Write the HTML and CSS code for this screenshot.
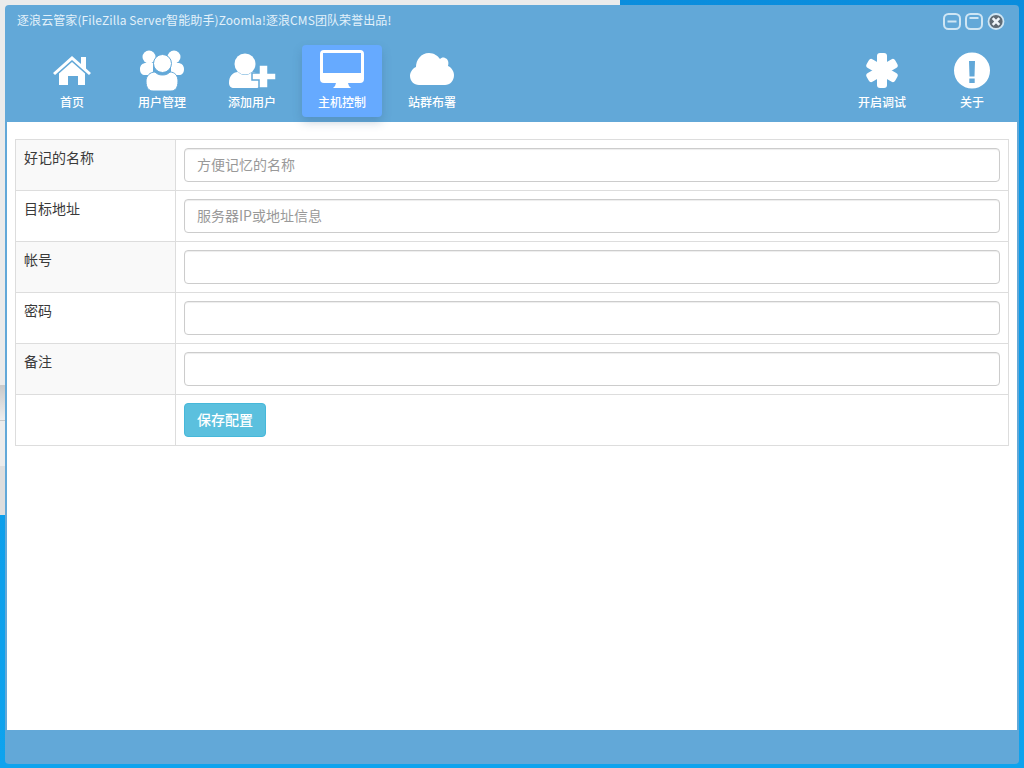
FILE: index.html
```html
<!DOCTYPE html>
<html lang="zh-CN">
<head>
    <meta charset="UTF-8">
    <title>逐浪云管家</title>
    <link rel="stylesheet" href="styles.css">
</head>
<body>

<!-- Windows behind the app -->
<div class="behind">
    <div class="behind-band"></div>
    <div class="behind-row"></div>
    <div class="behind-low"></div>
</div>

<div class="window">
    <!-- Title bar -->
    <div class="titlebar">
        <span class="title">逐浪云管家(FileZilla Server智能助手)Zoomla!逐浪CMS团队荣誉出品!</span>
        <div class="controls">
            <svg width="18" height="17" viewBox="0 0 18 17"><rect x="1" y="1" width="16" height="15" rx="4.500" fill="none" stroke="#cfe6f4" stroke-width="2"/><rect x="4.500" y="7.500" width="9" height="2" fill="#cfe6f4"/></svg>
            <svg width="18" height="17" viewBox="0 0 18 17"><rect x="1" y="1" width="16" height="15" rx="4.500" fill="none" stroke="#cfe6f4" stroke-width="2"/><rect x="4.500" y="4" width="9" height="2" fill="#cfe6f4"/></svg>
            <svg width="18" height="17" viewBox="0 0 18 17"><circle cx="9" cy="8.500" r="7.500" fill="#5f6b75" stroke="#cfe6f4" stroke-width="1.800"/><path d="M5.700 5.200l6.600 6.600M12.300 5.200l-6.600 6.600" stroke="#eef5fa" stroke-width="2.600"/></svg>
        </div>
    </div>

    <!-- Main navigation -->
    <div class="nav">
        <div class="nav-group">
            <a class="nav-item">
                <svg class="nav-icon" width="44" height="42" viewBox="0 0 44 42"><path d="M22 7l9 8V8h5v11.500l5 4.500-2 2-17-15L5 26l-2-2z" fill="#fff"/><path d="M22 13l13 11.500V36h-7v-9H18v9H9V24.500z" fill="#fff"/></svg>
                <span>首页</span>
            </a>
            <a class="nav-item">
                <svg class="nav-icon" width="44" height="42" viewBox="0 0 44 42">
                    <circle cx="9" cy="8" r="6.500" fill="#fff"/><circle cx="34" cy="8" r="6.500" fill="#fff"/>
                    <path d="M0 20c0-4 3-6 6-6h7v12H5c-3 0-5-2-5-6zM44 20c0-4-3-6-6-6h-7v12h8c3 0 5-2 5-6z" fill="#fff"/>
                    <circle cx="22.500" cy="14.500" r="9" fill="#fff" stroke="#62a8d8" stroke-width="1"/>
                    <path d="M6 32c0-5 4-9 9-9 2 2 4 3 7.500 3s5.500-1 7.500-3c5 0 8 4 8 9 0 7-3 10-7 10H13c-4 0-7-3-7-10z" fill="#fff" stroke="#62a8d8" stroke-width="1"/>
                </svg>
                <span>用户管理</span>
            </a>
            <a class="nav-item">
                <svg class="nav-icon" width="48" height="42" viewBox="0 0 48 42">
                    <circle cx="17" cy="15" r="10.500" fill="#fff"/>
                    <path d="M1 34c0-7 4-11 9-11 2 2 4 3 7 3s5-1 7-3c5 0 9 3 9 11 0 3-2 5-5 5H6c-3 0-5-2-5-5z" fill="#fff"/>
                    <path d="M31 16h9v8h8v7h-8v8h-9v-8h-7v-7h7z" fill="#fff" stroke="#62a8d8" stroke-width="1.500"/>
                </svg>
                <span>添加用户</span>
            </a>
            <a class="nav-item active">
                <svg class="nav-icon" width="44" height="42" viewBox="0 0 44 42"><path d="M4 1h36a4 4 0 0 1 4 4v25a4 4 0 0 1-4 4H4a4 4 0 0 1-4-4V5a4 4 0 0 1 4-4zM3 4v20h38V4z" fill="#fff" fill-rule="evenodd"/><path d="M16 34h12l1 3 2 2H13l2-2z" fill="#fff"/></svg>
                <span>主机控制</span>
            </a>
            <a class="nav-item">
                <svg class="nav-icon" width="44" height="42" viewBox="0 0 44 42"><path d="M9 36C4 36 0 32 0 27c0-4 3-8 6-9 0-7 5-14 13-14 5 0 9 3 11 6 1-1 3-2 5-1 3 1 4 4 3 8 3 1 6 5 6 9 0 6-4 10-9 10z" fill="#fff"/></svg>
                <span>站群布署</span>
            </a>
        </div>
        <div class="nav-group">
            <a class="nav-item">
                <svg class="nav-icon" width="36" height="42" viewBox="0 0 36 42" fill="#fff">
                    <rect x="13" y="4" width="10" height="35" rx="3"/>
                    <rect x="13" y="5" width="10" height="33" rx="3" transform="rotate(60 18 21.500)"/>
                    <rect x="13" y="5" width="10" height="33" rx="3" transform="rotate(-60 18 21.500)"/>
                </svg>
                <span>开启调试</span>
            </a>
            <a class="nav-item">
                <svg class="nav-icon" width="36" height="42" viewBox="0 0 36 42"><path d="M18 3.500a18 18 0 1 0 0 36 18 18 0 0 0 0-36zM15 12h6l-.5 15.500h-5zM15.300 29.500h5.400v4.500h-5.400z" fill="#fff" fill-rule="evenodd"/></svg>
                <span>关于</span>
            </a>
        </div>
    </div>

    <!-- Host form -->
    <div class="content">
        <table class="form-table">
            <tr class="odd">
                <td class="label-cell">好记的名称</td>
                <td><input type="text" class="text-input" placeholder="方便记忆的名称"></td>
            </tr>
            <tr>
                <td class="label-cell">目标地址</td>
                <td><input type="text" class="text-input" placeholder="服务器IP或地址信息"></td>
            </tr>
            <tr class="odd">
                <td class="label-cell">帐号</td>
                <td><input type="text" class="text-input"></td>
            </tr>
            <tr>
                <td class="label-cell">密码</td>
                <td><input type="text" class="text-input"></td>
            </tr>
            <tr class="odd">
                <td class="label-cell">备注</td>
                <td><input type="text" class="text-input"></td>
            </tr>
            <tr>
                <td class="label-cell"></td>
                <td><button class="save-btn">保存配置</button></td>
            </tr>
        </table>
    </div>

    <div class="footer"></div>
</div>

</body>
</html>
```

FILE: styles.css
```css
/* Desktop behind the app window */
html, body {
    margin: 0;
    height: 100%;
}

body {
    position: relative;
    overflow: hidden;
    background: linear-gradient(to bottom, #0a8ddd 0, #0a9ae8 200px, #0ea3ee 100%);
    font-family: "Noto Sans CJK SC", "Liberation Sans", sans-serif;
    font-size: 14px;
    color: #3a3a3a;
}

.behind {
    position: absolute;
    left: 0;
    top: 0;
    width: 620px;
    height: 515px;
    background-color: #ebebeb;
}

.behind-band {
    position: absolute;
    left: 0;
    top: 385px;
    width: 100%;
    height: 35px;
    background: linear-gradient(to bottom, #c9c9c9, #eeeeee);
    border-bottom: 1px solid #c8c8c8;
}

.behind-row {
    position: absolute;
    left: 0;
    top: 421px;
    width: 100%;
    height: 45px;
    background-color: #ececec;
}

.behind-low {
    position: absolute;
    left: 0;
    top: 466px;
    width: 100%;
    height: 49px;
    background-color: #dedede;
}

/* App window */
.window {
    position: absolute;
    left: 5px;
    top: 5px;
    width: 1014px;
    height: 759px;
    display: flex;
    flex-direction: column;
    background-color: #62a8d8;
    border-radius: 4px;
}

.titlebar {
    height: 40px;
    display: flex;
    justify-content: space-between;
    padding: 8px 14px 0 12px;
    box-sizing: border-box;
}

.title {
    font-size: 12px;
    line-height: 14px;
    letter-spacing: 0.09px;
    color: #e3f1fa;
}

.controls {
    display: flex;
    gap: 4px;
    height: 17px;
}

/* Navigation */
.nav {
    position: relative;
    z-index: 1;
    height: 77px;
    display: flex;
    justify-content: space-between;
    padding: 0 7px 0 27px;
}

.nav-group {
    display: flex;
    gap: 10px;
}

.nav-item {
    width: 80px;
    height: 72px;
    display: flex;
    flex-direction: column;
    align-items: center;
    border-radius: 4px;
    color: #fff;
    font-size: 12px;
    font-weight: 500;
}

.nav-item.active {
    background-color: #66aaff;
    box-shadow: 0 5px 10px rgba(60, 100, 140, 0.3);
}

.nav-icon {
    display: block;
    margin-top: 4px;
}

.nav-item span {
    margin-top: 2px;
    line-height: 17px;
}

/* Form */
.content {
    flex: 1;
    margin: 0 2px;
    padding: 17px 8px 0;
    background-color: #fff;
}

.form-table {
    width: 994px;
    table-layout: fixed;
    border-collapse: collapse;
}

.form-table td {
    padding: 8px;
    border: 1px solid #ddd;
    vertical-align: top;
    line-height: 18px;
}

.form-table .label-cell {
    width: 143px;
}

.form-table tr.odd td {
    background-color: #f9f9f9;
}

.form-table tr.odd td + td {
    background-color: #fff;
}

.text-input {
    display: block;
    width: 100%;
    height: 34px;
    box-sizing: border-box;
    padding: 5px 12px 7px;
    border: 1px solid #ccc;
    border-radius: 4px;
    background-color: #fff;
    box-shadow: inset 0 1px 1px rgba(0, 0, 0, 0.075);
    font-family: inherit;
    font-size: 14px;
    color: #555;
}

.text-input::placeholder {
    color: #999;
}

.save-btn {
    display: block;
    height: 34px;
    padding: 5px 12px 7px;
    border: 1px solid #46b8da;
    border-radius: 4px;
    background-color: #5bc0de;
    color: #fff;
    font-family: inherit;
    font-size: 14px;
    line-height: 20px;
    font-weight: 500;
}

.footer {
    height: 34px;
}
```
